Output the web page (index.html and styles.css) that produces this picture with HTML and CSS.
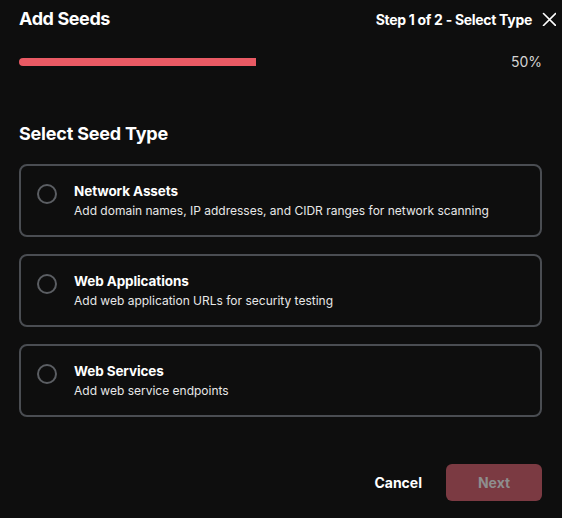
FILE: index.html
```html
<!DOCTYPE html>
<html lang="en">
<head>
    <meta charset="UTF-8">
    <meta name="viewport" content="width=device-width, initial-scale=1.0">
    <title>Add Seeds</title>
    <link rel="stylesheet" href="styles.css">
</head>
<body>
    <div class="modal">
        <div class="modal-header">
            <h2>Add Seeds</h2>
            <div class="step-info">
                <span>Step 1 of 2 - Select Type</span>
                <button class="close-btn" aria-label="Close">
                    <svg width="14" height="14" viewBox="0 0 14 14"><path d="M1.5 1.5 L13.5 13.5 M13.5 1.5 L1.5 13.5" stroke="#fff" stroke-width="1.6" stroke-linecap="round"/></svg>
                </button>
            </div>
        </div>

        <div class="progress-row">
            <div class="progress-track"><div class="progress-fill" style="width: 50%"></div></div>
            <span class="progress-label">50%</span>
        </div>

        <h3 class="section-title">Select Seed Type</h3>

        <div class="seed-options">
            <label class="seed-card">
                <span class="radio"></span>
                <span class="seed-text">
                    <b>Network Assets</b>
                    <span>Add domain names, IP addresses, and CIDR ranges for network scanning</span>
                </span>
            </label>
            <label class="seed-card">
                <span class="radio"></span>
                <span class="seed-text">
                    <b>Web Applications</b>
                    <span>Add web application URLs for security testing</span>
                </span>
            </label>
            <label class="seed-card">
                <span class="radio"></span>
                <span class="seed-text">
                    <b>Web Services</b>
                    <span>Add web service endpoints</span>
                </span>
            </label>
        </div>

        <div class="modal-footer">
            <button class="cancel-btn">Cancel</button>
            <button class="next-btn" disabled>Next</button>
        </div>
    </div>
</body>
</html>
```

FILE: styles.css
```css
* {
    margin: 0;
    padding: 0;
    box-sizing: border-box;
}
body {
    background-color: #0e0e0e;
    color: #fff;
    font-family: Inter, "Noto Sans", sans-serif;
}
.modal {
    width: 562px;
    height: 518px;
    padding: 0 20px 0 19px;
}
.modal-header {
    display: flex;
    justify-content: space-between;
    align-items: center;
    padding-top: 3px;
    height: 33px;
}
.modal-header h2 {
    font-size: 18px;
    font-weight: 700;
    letter-spacing: -0.4px;
}
.step-info {
    display: flex;
    align-items: center;
    gap: 10px;
    font-size: 14px;
    font-weight: 700;
    letter-spacing: -0.3px;
    margin-right: -14px;
    padding-top: 2px;
}
.close-btn {
    background: none;
    border: none;
    display: flex;
    cursor: pointer;
}
.progress-row {
    display: flex;
    align-items: center;
    margin-top: 20px;
    height: 17px;
}
.progress-track {
    width: 474px;
    height: 8px;
}
.progress-fill {
    height: 100%;
    background-color: #e95a64;
    border-radius: 4px 0 0 4px;
}
.progress-label {
    margin-left: auto;
    font-size: 14px;
    color: #d4d4d4;
}
.section-title {
    font-size: 18px;
    font-weight: 700;
    margin-top: 53px;
    letter-spacing: -0.2px;
}
.seed-options {
    display: flex;
    flex-direction: column;
    gap: 17px;
    margin-top: 20px;
}
.seed-card {
    display: flex;
    align-items: center;
    gap: 17px;
    height: 73px;
    padding: 0 16px;
    border: 2px solid #4a4d52;
    border-radius: 8px;
    cursor: pointer;
}
.radio {
    width: 20px;
    height: 20px;
    border: 2px solid #5b5e63;
    border-radius: 50%;
    flex-shrink: 0;
    margin-top: -13px;
}
.seed-text {
    display: flex;
    flex-direction: column;
    gap: 4px;
    margin-top: 0;
}
.seed-text b {
    font-size: 13.5px;
    font-weight: 700;
    letter-spacing: -0.1px;
}
.seed-text span {
    font-size: 12px;
    color: #e8e8e8;
}
.modal-footer {
    display: flex;
    justify-content: flex-end;
    align-items: center;
    gap: 24px;
    margin-top: 47px;
}
.cancel-btn {
    background: none;
    border: none;
    color: #fff;
    font-family: inherit;
    font-size: 14px;
    font-weight: 700;
    cursor: pointer;
}
.next-btn {
    width: 96px;
    height: 37px;
    background-color: #7b3a42;
    color: #8e8e8e;
    border: none;
    border-radius: 6px;
    font-family: inherit;
    font-size: 14px;
    font-weight: 700;
}
```
